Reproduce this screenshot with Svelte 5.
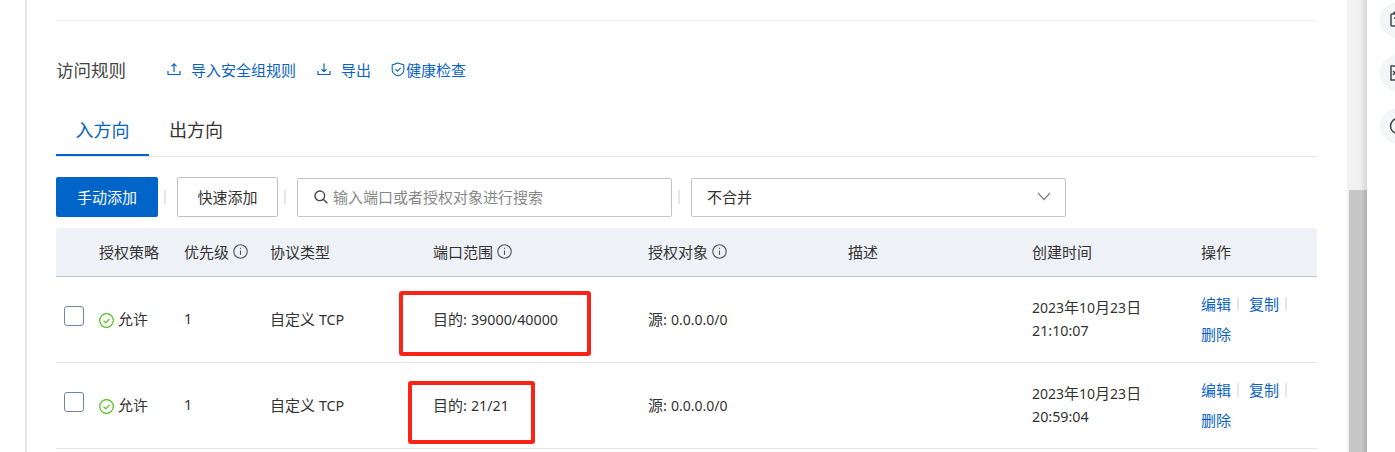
<script>
	const columns = [
		{ label: '' },
		{ label: '授权策略' },
		{ label: '优先级', info: true },
		{ label: '协议类型' },
		{ label: '端口范围', info: true },
		{ label: '授权对象', info: true },
		{ label: '描述' },
		{ label: '创建时间' },
		{ label: '操作' }
	];

	const rules = [
		{ port: '39000/40000', time: '21:10:07', mark: 'mark-a' },
		{ port: '21/21', time: '20:59:04', mark: 'mark-b' }
	];
</script>

<div class="page">
	<main class="card">
		<div class="top-line"></div>

		<div class="title-row">
			<span class="title">访问规则</span>
			<a class="link first">
				<svg width="14" height="14" viewBox="0 0 14 14" fill="none" stroke="currentColor" stroke-width="1.2">
					<path d="M1 9v3.5h12V9M7 10V2M4.5 4.3 7 1.8l2.5 2.5" />
				</svg>
				<span>导入安全组规则</span>
			</a>
			<a class="link second">
				<svg width="14" height="14" viewBox="0 0 14 14" fill="none" stroke="currentColor" stroke-width="1.2">
					<path d="M1 9v3.5h12V9M7 1.5v8M4.5 7.2 7 9.7l2.5-2.5" />
				</svg>
				<span>导出</span>
			</a>
			<a class="link third">
				<svg width="14" height="15" viewBox="0 0 14 15" fill="none" stroke="currentColor" stroke-width="1.1">
					<path d="M7 1 1.2 3v5c0 3 3 5 5.8 6 2.8-1 5.8-3 5.8-6V3z" />
					<path d="m4.4 7.2 2 2 3.3-3.4" />
				</svg>
				<span>健康检查</span>
			</a>
		</div>

		<nav class="tabs">
			<span class="tab active">入方向</span>
			<span class="tab">出方向</span>
		</nav>

		<div class="toolbar">
			<button class="btn primary">手动添加</button>
			<i class="sep"></i>
			<button class="btn">快速添加</button>
			<i class="sep"></i>
			<div class="search">
				<svg width="16" height="16" viewBox="0 0 16 16" fill="none" stroke="#444" stroke-width="1.4">
					<circle cx="6.8" cy="6.8" r="4.8" />
					<path d="m10.3 10.3 4 4" />
				</svg>
				<span>输入端口或者授权对象进行搜索</span>
			</div>
			<i class="sep"></i>
			<div class="select">
				<span>不合并</span>
				<svg width="14" height="9" viewBox="0 0 14 9" fill="none" stroke="#808080" stroke-width="1.2">
					<path d="m1 1 6 6.5L13 1" />
				</svg>
			</div>
		</div>

		<div class="table">
			<div class="row head">
				{#each columns as col}
					<div class="cell">
						{col.label}
						{#if col.info}
							<svg class="info" width="15" height="15" viewBox="0 0 15 15" fill="none" stroke="#555" stroke-width="1.1">
								<circle cx="7.5" cy="7.5" r="6.7" />
								<path d="M7.5 6.5v4.5M7.5 3.8v1.2" />
							</svg>
						{/if}
					</div>
				{/each}
			</div>

			{#each rules as rule}
				<div class="row body">
					<div class="cell"><span class="check"></span></div>
					<div class="cell allow">
						<svg width="15" height="15" viewBox="0 0 15 15" fill="none" stroke="#4fbf1c" stroke-width="1.2">
							<circle cx="7.5" cy="7.5" r="6.8" />
							<path d="m4.6 7.6 2.1 2.2 3.8-4" />
						</svg>
						允许
					</div>
					<div class="cell"><span class="lat">1</span></div>
					<div class="cell"><span>自定义 <span class="lat">TCP</span></span></div>
					<div class="cell port">
						<span>目的: <span class="lat">{rule.port}</span></span>
						<span class="mark {rule.mark}"></span>
					</div>
					<div class="cell"><span>源: <span class="lat narrow">0.0.0.0/0</span></span></div>
					<div class="cell"></div>
					<div class="cell when">
						<span class="lat narrow">2023</span>年<span class="lat narrow">10</span>月<span class="lat narrow">23</span>日<br />
						<span class="lat">{rule.time}</span>
					</div>
					<div class="cell ops">
						<div><a>编辑</a><i></i><a>复制</a><i></i></div>
						<div><a>删除</a></div>
					</div>
				</div>
			{/each}
		</div>
	</main>

	<div class="scrollbar"><div class="thumb"></div></div>

	<aside class="side">
		<span class="round">
			<svg width="20" height="20" viewBox="0 0 20 20" fill="none" stroke="#444" stroke-width="1.5">
				<rect x="3" y="4" width="13" height="12" rx="1" />
				<path d="M6 4V2.5h7V4M6 8h7" />
			</svg>
		</span>
		<span class="round">
			<svg width="20" height="20" viewBox="0 0 20 20" fill="none" stroke="#444" stroke-width="1.5">
				<rect x="3" y="3" width="14" height="14" />
				<path d="m5 8 2 2-2 2" />
			</svg>
		</span>
		<span class="round">
			<svg width="20" height="20" viewBox="0 0 20 20" fill="none" stroke="#444" stroke-width="1.5">
				<circle cx="10" cy="10" r="7.5" />
			</svg>
		</span>
	</aside>
</div>

<style>
	:global(body) {
		margin: 0;
		background: #fff;
		overflow: hidden;
	}

	.page {
		display: flex;
		width: 1395px;
		height: 452px;
		overflow: hidden;
		font-family: 'Noto Sans', 'Noto Sans CJK SC', sans-serif;
		font-size: 15px;
		color: #333;
	}

	.lat {
		font-size: 14.3px;
	}

	.lat.narrow {
		font-size: 14px;
	}

	.card {
		box-sizing: border-box;
		width: 1322px;
		margin-left: 25px;
		padding: 20px 0 0 29px;
		border-left: 2px solid #e8e8e8;
		flex: none;
	}

	.card > * {
		width: 1261px;
	}

	.top-line {
		height: 1px;
		background: #eeeff1;
	}

	.title-row {
		display: flex;
		align-items: center;
		height: 30px;
		margin-top: 33px;
	}

	.title {
		width: 111px;
		font-size: 17.5px;
		color: #444;
	}

	.link {
		display: flex;
		align-items: center;
		color: #0a62c4;
	}

	.first span,
	.second span {
		margin-left: 10px;
	}

	.second {
		margin-left: 21px;
	}

	.third {
		margin-left: 20px;
	}

	.third span {
		margin-left: 1px;
	}

	.tabs {
		display: flex;
		height: 53px;
		margin-top: 20px;
		box-sizing: border-box;
		border-bottom: 1px solid #e2e4e8;
	}

	.tab {
		width: 54px;
		height: 52px;
		margin-left: 20px;
		line-height: 52px;
		text-align: center;
		white-space: nowrap;
		font-size: 18px;
		color: #333;
	}

	.tab.active {
		width: 93px;
		height: 50px;
		margin-left: 0;
		color: #0a62c4;
		border-bottom: 2px solid #0064c8;
	}

	.toolbar {
		display: flex;
		align-items: center;
		height: 40px;
		margin-top: 20px;
	}

	.btn {
		box-sizing: border-box;
		width: 101px;
		height: 40px;
		padding: 0 0 2px;
		border: 1px solid #bfc1c6;
		border-radius: 2px;
		background: #fff;
		font: inherit;
		color: #333;
	}

	.btn.primary {
		width: 102px;
		border: none;
		background: #0064c8;
		color: #fff;
	}

	.sep {
		width: 2px;
		height: 14px;
		margin: 0 11px 0 6px;
		background: #e6e6e6;
	}

	.search {
		box-sizing: border-box;
		display: flex;
		align-items: center;
		gap: 4px;
		width: 375px;
		height: 39px;
		padding: 0 0 1px 15px;
		border: 1px solid #c4c6cb;
		border-radius: 2px;
		color: #888;
	}

	.select {
		box-sizing: border-box;
		display: flex;
		align-items: center;
		justify-content: space-between;
		width: 375px;
		height: 39px;
		padding: 0 14px 1px 15px;
		border: 1px solid #c4c6cb;
		border-radius: 2px;
	}

	.table {
		margin-top: 11px;
	}

	.row {
		display: grid;
		grid-template-columns: 43px 85px 86px 163px 215px 200px 184px 169px 116px;
		border-bottom: 1px solid #e5e6e8;
	}

	.row.head {
		height: 49px;
		box-sizing: border-box;
		background: #eef1f6;
		border-bottom-color: #c4c6cc;
		border-radius: 3px 3px 0 0;
	}

	.row.body {
		height: 86px;
		box-sizing: border-box;
	}

	.cell {
		display: flex;
		align-items: center;
		position: relative;
	}

	.head .cell {
		padding-bottom: 2px;
		box-sizing: border-box;
	}

	.body .cell {
		padding-bottom: 3px;
		box-sizing: border-box;
	}

	.info {
		margin-left: 4px;
	}

	.check {
		box-sizing: border-box;
		width: 20px;
		height: 20px;
		margin: -4px 0 0 8px;
		border: 1px solid #6d86a3;
		border-radius: 3px;
	}

	.allow {
		gap: 4px;
	}

	.allow svg {
		margin-top: 5px;
	}

	.body .when {
		display: block;
		align-self: center;
		padding: 0;
		margin-top: -2px;
		line-height: 22px;
	}

	.body .ops {
		display: block;
		align-self: center;
		padding: 0;
		margin-top: -2px;
	}

	.ops div {
		display: flex;
		align-items: center;
		height: 30px;
	}

	.ops a {
		color: #0a62c4;
	}

	.ops i {
		width: 2px;
		height: 14px;
		margin: 0 10px 0 6px;
		background: #e3e7ee;
	}

	/* red annotation boxes drawn over the screenshot */
	.mark {
		position: absolute;
		box-sizing: border-box;
		border: 4px solid #fb2216;
		border-radius: 3px;
	}

	.mark-a {
		left: -34px;
		top: 14px;
		width: 192px;
		height: 65px;
	}

	.mark-b {
		left: -25px;
		top: 18px;
		width: 127px;
		height: 63px;
	}

	.scrollbar {
		flex: none;
		width: 20px;
		height: 452px;
		background: linear-gradient(90deg, #f2f2f2 60%, #d8d8d8);
	}

	.thumb {
		height: 262px;
		margin: 190px 0 0 2px;
		background: linear-gradient(90deg, #c6c6c6 70%, #aeaeae);
	}

	.side {
		flex: none;
		box-sizing: border-box;
		width: 28px;
		height: 452px;
		padding: 2px 0 0 13px;
		display: flex;
		flex-direction: column;
		gap: 17px;
		overflow: hidden;
	}

	.round {
		flex: none;
		display: flex;
		align-items: center;
		justify-content: center;
		width: 36px;
		height: 36px;
		border-radius: 50%;
		background: #f4f5f7;
	}
</style>
